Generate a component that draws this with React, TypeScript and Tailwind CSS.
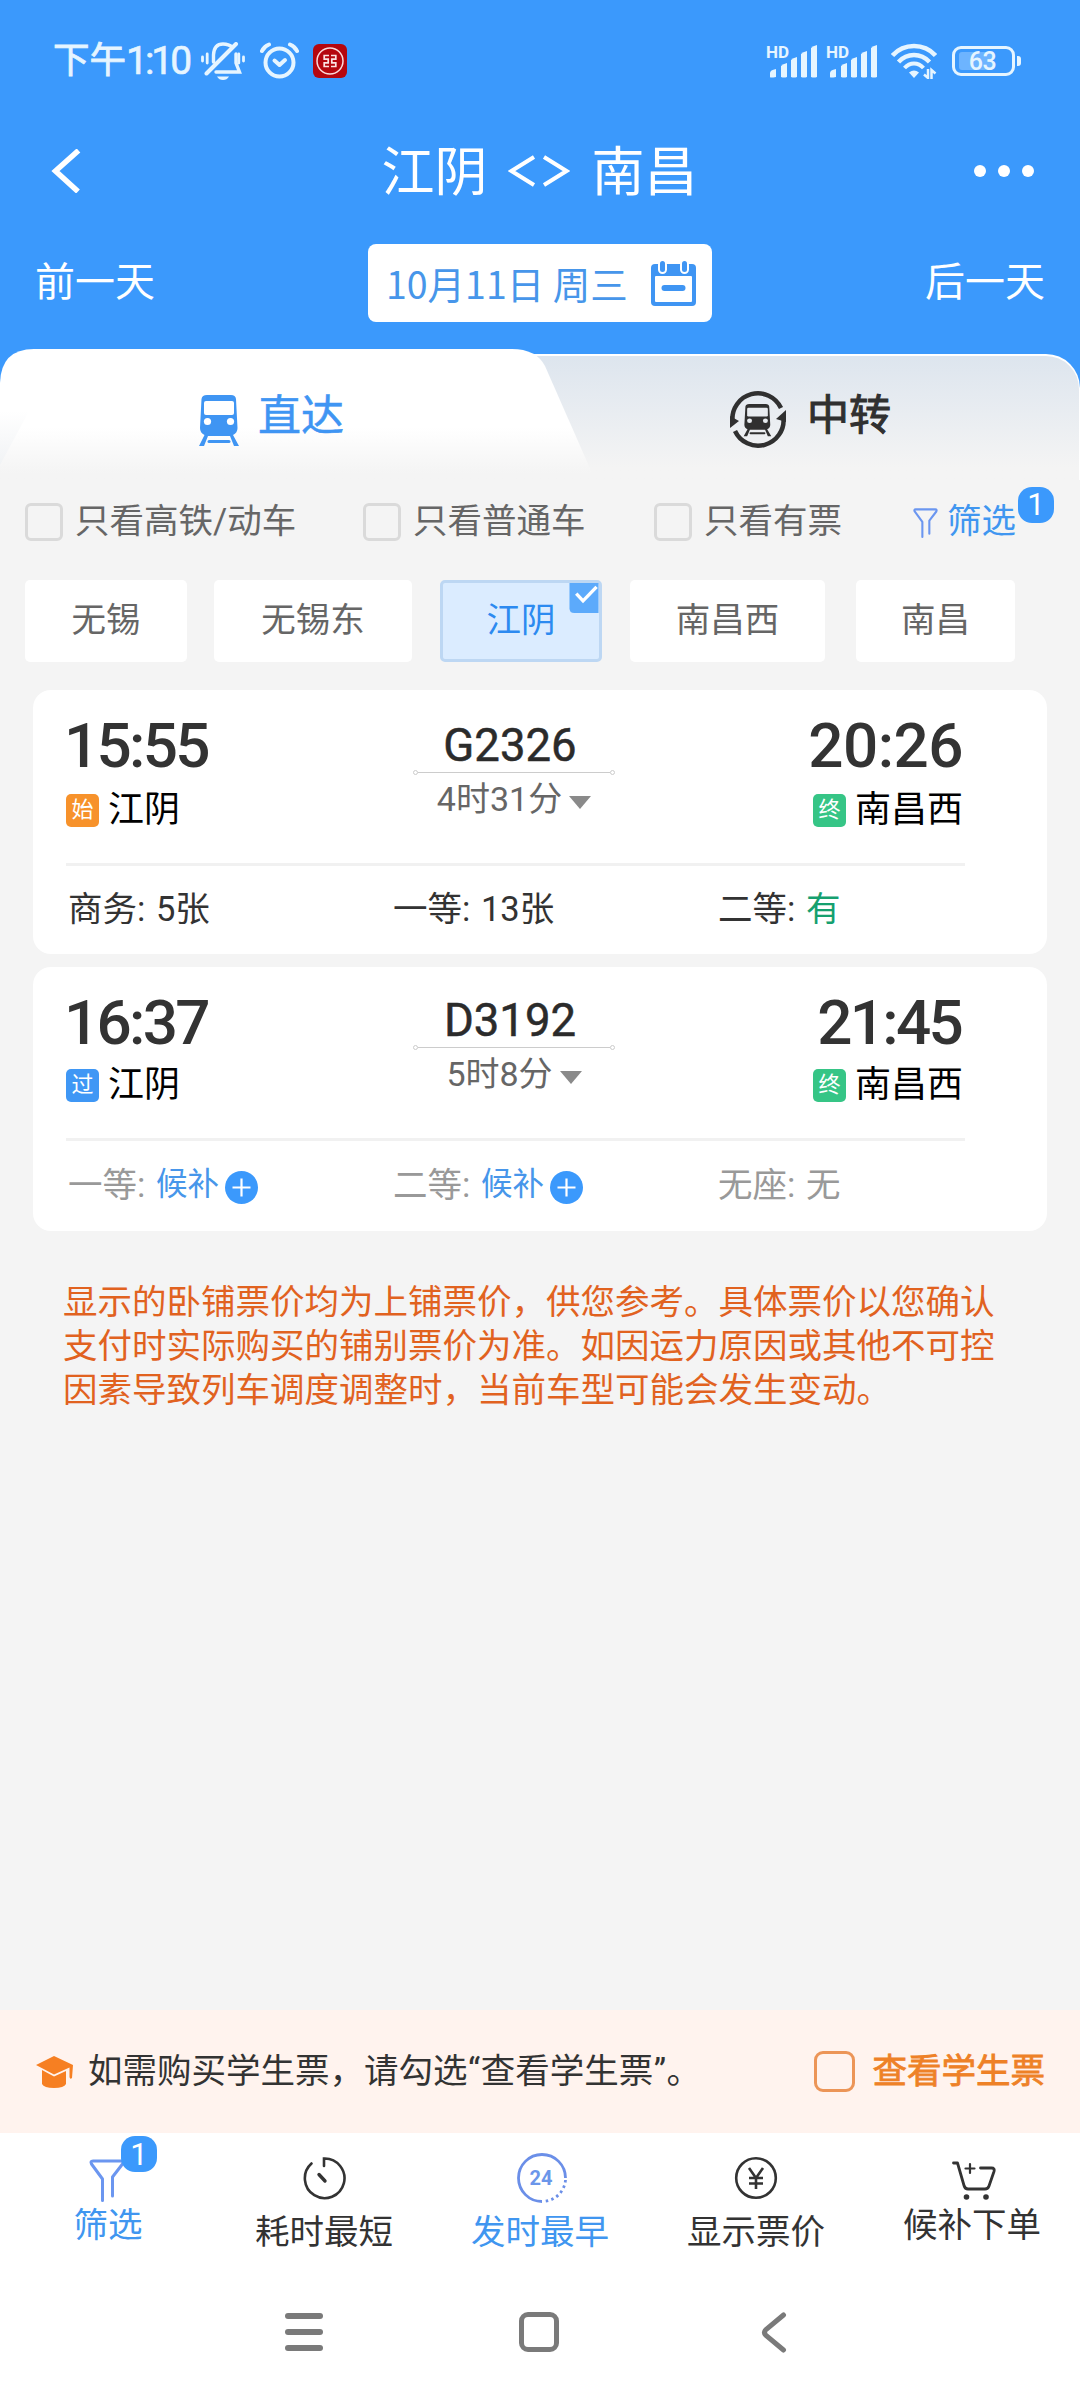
import React from "react";

type Seat = {
  label: string;
  value: string;
  status: "count" | "plenty" | "waitlist" | "none";
};

type Train = {
  code: string;
  duration: string;
  depart: string;
  arrive: string;
  from: string;
  to: string;
  fromTag: string;
  fromTagColor: string;
  rowHeight: string;
  seats: Seat[];
};

const trains: Train[] = [
  {
    code: "G2326",
    duration: "4时31分",
    depart: "15:55",
    arrive: "20:26",
    from: "江阴",
    to: "南昌西",
    fromTag: "始",
    fromTagColor: "bg-[#f7922b]",
    rowHeight: "h-[113px]",
    seats: [
      { label: "商务", value: "5张", status: "count" },
      { label: "一等", value: "13张", status: "count" },
      { label: "二等", value: "有", status: "plenty" },
    ],
  },
  {
    code: "D3192",
    duration: "5时8分",
    depart: "16:37",
    arrive: "21:45",
    from: "江阴",
    to: "南昌西",
    fromTag: "过",
    fromTagColor: "bg-[#3f97f5]",
    rowHeight: "h-[111px]",
    seats: [
      { label: "一等", value: "候补", status: "waitlist" },
      { label: "二等", value: "候补", status: "waitlist" },
      { label: "无座", value: "无", status: "none" },
    ],
  },
];

const stations = [
  { name: "无锡", box: "w-[162px]" },
  { name: "无锡东", box: "ml-[27px] w-[198px]" },
  { name: "江阴", box: "ml-[28px] w-[162px]", active: true },
  { name: "南昌西", box: "ml-[28px] w-[195px]" },
  { name: "南昌", box: "ml-[31px] w-[159px]" },
];

const notice = [
  "显示的卧铺票价均为上铺票价，供您参考。具体票价以您确认",
  "支付时实际购买的铺别票价为准。如因运力原因或其他不可控",
  "因素导致列车调度调整时，当前车型可能会发生变动。",
];

const SignalBars = () => (
  <div className="relative h-[34px] w-[50px]">
    <span className="absolute left-[-2px] top-[1px] text-[17px] font-bold leading-[14px]">HD</span>
    <svg width="50" height="34" viewBox="0 0 50 34" fill="currentColor">
      <path d="M2 33V29Q2 26 8 25V33Q2 34 2 33Z" />
      <path d="M13 33V22Q15 20 19 19V33Q16 34 13 33Z" />
      <path d="M23 33V16Q25 14 29 13V33Q26 34 23 33Z" />
      <path d="M33 33V10Q35 8 39 7V33Q36 34 33 33Z" />
      <path d="M43 33V4Q45 2 49 1V33Q46 34 43 33Z" />
    </svg>
  </div>
);

const StatusBar = () => (
  <div className="flex h-[122px] items-center pl-[53px] text-[#e6f5ff]">
    <span className="w-[73px] whitespace-nowrap text-[36.5px] leading-none [-webkit-text-stroke:0.8px]">下午</span>
    <span className="w-[75px] text-[39px] leading-none tracking-[-3px] [-webkit-text-stroke:0.6px]">1:10</span>
    <svg width="44" height="38" viewBox="0 0 44 38" fill="none" stroke="currentColor" strokeWidth="3.4" strokeLinecap="round">
      <path d="M12.5 20V13Q13 2 22 2Q28 2 31 5" />
      <path d="M35 12V21L38.5 30H15" />
      <path d="M5.5 31.5L35 2" strokeWidth="4" />
      <path d="M1.5 15V19M6.2 12V21M37.8 12V21M42.5 15V19" strokeWidth="2.8" />
      <path d="M16 34.5H28Q26 38 22 38Q18 38 16 34.5Z" fill="currentColor" stroke="none" />
    </svg>
    <svg className="ml-[15px]" width="39" height="38" viewBox="0 0 39 38" fill="none" stroke="currentColor" strokeWidth="4" strokeLinecap="round" strokeLinejoin="round">
      <circle cx="19.5" cy="20.5" r="14" />
      <path d="M2 9Q4 4.500 9 2.500M37 9Q35 4.500 30 2.500" />
      <path d="M14.500 18.500L19.500 23L25 18" />
    </svg>
    <svg className="ml-[14px]" width="34" height="34" viewBox="0 0 34 34" fill="none">
      <rect width="34" height="34" rx="6" fill="#b5070f" />
      <circle cx="17" cy="17" r="13" stroke="#fbd9d9" strokeWidth="1.500" />
      <path d="M16 11.500H11.200V15.200H15.200V18.800H11.200V22.500H16M18 11.500H22.800V15.200H18.800V18.800H22.800V22.500H18" stroke="#fbe3e3" strokeWidth="1.700" />
    </svg>
    <div className="ml-[421px] flex items-center">
      <SignalBars />
      <div className="w-[10px]" />
      <SignalBars />
      <svg className="ml-[13px]" width="46" height="36" viewBox="0 0 46 36" fill="none" stroke="currentColor" strokeWidth="4.500">
        <path d="M1.500 12.500Q10 3 23 3Q36 3 44.500 12.500" />
        <path d="M7.500 19Q14 12 23 12Q32 12 38.500 19" />
        <path d="M13.500 25Q17.500 20.500 23 20.500Q28.500 20.500 32.500 25" strokeWidth="4" />
        <path d="M18 29.500Q23 25.500 28 29.500L23 35Z" fill="currentColor" stroke="none" />
        <path d="M37 26V35L33 31.500M40.500 36V27L44.500 30.500" strokeWidth="2.500" />
      </svg>
      <div className="relative ml-[15px] flex h-[30px] w-[63px] items-center justify-center rounded-[9px] border-[3px] border-[#e6f5ff]">
        <div className="absolute left-[4px] top-[3px] h-[18px] w-[34px] rounded-[3px] bg-[#6db4ff]" />
        <span className="relative mr-[2px] text-[25px] font-medium leading-none tracking-[-0.5px]">63</span>
      </div>
      <div className="ml-[2px] h-[10px] w-[4px] rounded-r-[3px] bg-[#e6f5ff]" />
    </div>
  </div>
);

const TrainIcon = ({ window = "#fff" }: { window?: string }) => (
  <>
    <path d="M9 0H33Q37.500 0 38 4L39.500 33Q39.500 38 35 40L41 51H36L32 41H10L6 51H1L6.500 40Q2 38 2 33L3.500 4Q4 0 9 0Z" fill="currentColor" />
    <rect x="6" y="6" width="30" height="14" rx="2" fill={window} />
    <circle cx="9.500" cy="26.500" r="3.600" fill={window} />
    <circle cx="32.500" cy="26.500" r="3.600" fill={window} />
    <path d="M11 46.500H31" stroke="currentColor" strokeWidth="3" strokeLinecap="round" />
  </>
);

const Tabs = () => (
  <div className="relative h-[131px]">
    {/* Transfer tab sits behind the slanted direct tab */}
    <div className="absolute inset-x-0 bottom-0 top-[5px] rounded-tr-[34px] bg-white pr-[1px] pt-[2px] [clip-path:inset(0_0_0_60px)]">
      <div className="h-full rounded-tr-[33px] bg-gradient-to-b from-[#dde5ee] from-0% to-[#f4f4f4] to-90%" />
    </div>
    <div className="absolute left-0 top-0 h-[131px] w-[592px] bg-gradient-to-b from-white from-60% to-[#f4f4f4] to-95% [clip-path:path('M0_34Q1_0_34_0H512Q536_0_545_17L592_124V131H0Z')]">
      <div className="mt-[62px] h-[54px] w-[29px] bg-gradient-to-b from-white to-[#f1f3f5] [clip-path:polygon(0_0,100%_0,0_100%)]" />
    </div>
    <div className="relative flex h-[131px]">
      <div className="flex w-[540px] pl-[198px] pt-[46px] text-[#3f95f3]">
        <svg width="42" height="51" viewBox="0 0 42 51" fill="none">
          <TrainIcon />
        </svg>
        <span className="ml-[18px] h-[43px] text-[43px] leading-none [-webkit-text-stroke:0.5px]">直达</span>
      </div>
      <div className="flex w-[540px] pl-[190px] pt-[42px] text-[#303030]">
        <svg width="56" height="57" viewBox="0 0 56 57" fill="none">
          <path d="M2.500 30A25.500 25.500 0 0 1 51 17M53.500 27A25.500 25.500 0 0 1 5 40" stroke="currentColor" strokeWidth="4.500" />
          <path d="M0 37V25L9 30Z" fill="currentColor" />
          <path d="M56 19V31L46 28Z" fill="currentColor" />
          <g transform="translate(13 13) scale(.69 .63)">
            <TrainIcon window="#e8ecf0" />
          </g>
        </svg>
        <span className="ml-[21px] mt-[4px] h-[42px] text-[42px] leading-none [-webkit-text-stroke:1px]">中转</span>
      </div>
    </div>
  </div>
);

const FilterIcon = ({ className, stroke }: { className: string; stroke: number }) => (
  <svg className={className} viewBox="0 0 36 43" fill="none" stroke="#6b96f0" strokeWidth={stroke} strokeLinecap="round" strokeLinejoin="round">
    <path d="M13.500 41.500V20L2.500 5Q1 2 4 2H32Q35 2 33.500 5L23.500 18V37" />
  </svg>
);

const CheckItem = ({ label, className }: { label: string; className: string }) => (
  <div className={`flex items-center ${className}`}>
    <span className="h-[38px] w-[38px] rounded-[6px] border-[3px] border-[#dadada]" />
    <span className="mb-[2px] ml-[12px] text-[34.5px] leading-none">{label}</span>
  </div>
);

const Badge = ({ className }: { className: string }) => (
  <span
    className={`absolute flex h-[36px] w-[36px] items-center justify-center rounded-[14px] bg-[#3b99fc] text-[31px] leading-none text-white ${className}`}
  >
    1
  </span>
);

const StationTag = ({ text, color }: { text: string; color: string }) => (
  <span className={`flex h-[33px] w-[33px] items-center justify-center rounded-[5px] text-[22px] leading-none text-white ${color}`}>
    {text}
  </span>
);

const SeatCell = ({ seat }: { seat: Seat }) => {
  const muted = seat.status === "waitlist" || seat.status === "none";
  return (
    <div className={`flex w-[325px] shrink-0 items-center text-[34.5px] leading-none ${muted ? "text-[#999]" : "text-[#333]"}`}>
      <span className="whitespace-pre">{seat.label}: </span>
      {seat.status === "waitlist" ? (
        <>
          <span className="ml-[2px] text-[31.5px] text-[#4796ea]">{seat.value}</span>
          <svg className="ml-[6px] mt-[4px]" width="33" height="33" viewBox="0 0 33 33" stroke="#fff" strokeWidth="2.200">
            <circle cx="16.500" cy="16.500" r="16.500" fill="#3b99fc" stroke="none" />
            <path d="M7.500 16.500H25.500M16.500 7.500V25.500" />
          </svg>
        </>
      ) : (
        <span className={`ml-[2px] ${seat.status === "plenty" ? "text-[#15a06f]" : ""}`}>{seat.value}</span>
      )}
    </div>
  );
};

// Times holding a "1" are set tighter so the narrow digit leaves no gap
const TimeText = ({ time }: { time: string }) => (
  <span
    className={`text-[62px] font-medium leading-none text-[#333] ${
      time.includes("1") ? "mr-px tracking-[-2.700px]" : "mr-[-1px] tracking-[-0.500px]"
    }`}
  >
    {time}
  </span>
);

const TrainCard = ({ train }: { train: Train }) => (
  <div className="flex h-[264px] flex-col rounded-[18px] bg-white px-[33px] pt-[25px]">
    <div className={`flex ${train.rowHeight}`}>
      <div className="flex w-[347px] flex-col justify-between">
        <div className="ml-[-2px] flex">
          <TimeText time={train.depart} />
        </div>
        <div className="flex items-center">
          <StationTag text={train.fromTag} color={train.fromTagColor} />
          <span className="ml-[9px] text-[36px] leading-none text-black">{train.from}</span>
        </div>
      </div>
      <div className="flex w-[202px] flex-col items-center justify-end pb-[12px]">
        <span className="mb-[2px] mr-[8px] text-[45.500px] leading-none text-[#2b2b2b] [-webkit-text-stroke:0.5px]">{train.code}</span>
        <div className="flex w-full items-center">
          <i className="h-[5px] w-[5px] rounded-full border border-[#ccc]" />
          <i className="h-px flex-1 bg-[#ccc]" />
          <i className="h-[5px] w-[5px] rounded-full border border-[#ccc]" />
        </div>
        <div className="mt-[7px] flex items-center text-[#666]">
          <span className="text-[34px] leading-none">{train.duration}</span>
          <svg className="ml-[7px] mt-[6px]" width="22" height="13" viewBox="0 0 22 13">
            <path d="M0 0H22L11 13Z" fill="#8a8a8a" />
          </svg>
        </div>
      </div>
      <div className="flex flex-1 flex-col items-end justify-between pr-[52px]">
        <TimeText time={train.arrive} />
        <div className="flex items-center">
          <StationTag text="终" color="bg-[#36c586]" />
          <span className="ml-[9px] mr-[-1px] text-[36px] leading-none text-black">{train.to}</span>
        </div>
      </div>
    </div>
    <div className="mt-[35px] h-[3px] w-[899px] bg-[#f1f1f1]" />
    <div className="flex flex-1 items-center pb-[2px] pl-[2px]">
      {train.seats.map((seat) => (
        <SeatCell key={seat.label} seat={seat} />
      ))}
    </div>
  </div>
);

const ToolItem = ({
  label,
  gap,
  color = "text-[#333]",
  children,
}: {
  label: string;
  gap: string;
  color?: string;
  children: React.ReactNode;
}) => (
  <div className={`flex w-[216px] flex-col items-center pt-[20px] ${color}`}>
    <div className="relative flex h-[50px] w-[50px] items-center justify-center">{children}</div>
    <span className={`text-[34.5px] leading-none ${gap}`}>{label}</span>
  </div>
);

const Toolbar = () => (
  <div className="flex h-[131px] bg-white">
    <ToolItem label="筛选" gap="mt-[5px]" color="text-[#4096f0]">
      <FilterIcon className="mr-[3px] mt-[4px] h-[43px] w-[36px]" stroke={3} />
      <Badge className="left-[38px] top-[-17px]" />
    </ToolItem>
    <ToolItem label="耗时最短" gap="mt-[12px]">
      <svg width="44" height="44" viewBox="0 0 44 44" fill="none" stroke="currentColor" strokeWidth="2.600" strokeLinecap="round">
        <path d="M22 10V2.500A19.800 19.800 0 1 1 9.500 7.500" />
        <path d="M17 18.500L23 25" strokeWidth="3.400" />
      </svg>
    </ToolItem>
    <ToolItem label="发时最早" gap="mt-[12px]" color="text-[#4096f0]">
      <svg className="ml-[3px] shrink-0" width="52" height="50" viewBox="0 0 52 50" fill="none" stroke="#6b8fe8" strokeWidth="2.800">
        <path d="M26 48.500A23.500 23.500 0 1 1 49.500 25" />
        <path d="M49.500 27A23.500 23.500 0 0 1 27 48.500" strokeDasharray="2.500 3.200" />
      </svg>
      <span className="absolute ml-[2px] text-[20px] font-bold leading-none text-[#6b96ea]">24</span>
    </ToolItem>
    <ToolItem label="显示票价" gap="mt-[12px]">
      <svg width="44" height="44" viewBox="0 0 44 44" fill="none" stroke="currentColor" strokeWidth="2.600">
        <circle cx="22" cy="22" r="19.800" />
        <path d="M15 12L22 22L29 12M22 22V33M15 22H29M15 27.500H29" />
      </svg>
    </ToolItem>
    <ToolItem label="候补下单" gap="mt-[5px]">
      <svg className="ml-[3px] mt-[6px]" width="44" height="40" viewBox="0 0 44 40" fill="none" stroke="currentColor" strokeWidth="2.800" strokeLinecap="round" strokeLinejoin="round">
        <path d="M1.500 2H5.500L12 24.500Q13 28 16 28H33Q36 28 37 25L42 10.500Q43 7 39.500 7H28.500" />
        <path d="M18 3V12M13.500 7.500H22.500" strokeWidth="2.200" />
        <circle cx="14.500" cy="36" r="2.800" fill="currentColor" stroke="none" />
        <circle cx="34" cy="36" r="2.800" fill="currentColor" stroke="none" />
      </svg>
    </ToolItem>
  </div>
);

const App = () => {
  return (
    <div className="flex h-[2400px] w-[1080px] flex-col overflow-hidden bg-[#f4f4f4] font-['Roboto','Noto_Sans_CJK_SC',sans-serif]">
      <div className="bg-[#3b99fc] text-white">
        <StatusBar />
        {/* Route title */}
        <div className="flex h-[97px] items-center justify-between pl-[51px] pr-[46px]">
          <svg width="30" height="44" viewBox="0 0 30 44" fill="none" stroke="currentColor" strokeWidth="5.500">
            <path d="M27.500 1.500L4.500 22L27 42.500" />
          </svg>
          <h1 className="mb-[5px] ml-[24px] flex items-center text-[53px] leading-none font-['Noto_Sans_CJK_SC',sans-serif]">
            江阴
            <svg className="ml-[20px] mr-[22px] mt-[5px]" width="62" height="34" viewBox="0 0 62 34" fill="none" stroke="currentColor" strokeWidth="4">
              <path d="M26 3L3.500 17L26 31M36 3L58.500 17L36 31" />
            </svg>
            南昌
          </h1>
          <div className="flex gap-[12px]">
            <i className="h-[12px] w-[12px] rounded-full bg-white" />
            <i className="h-[12px] w-[12px] rounded-full bg-white" />
            <i className="h-[12px] w-[12px] rounded-full bg-white" />
          </div>
        </div>
        {/* Date switcher */}
        <div className="flex h-[130px] items-center justify-between px-[35px] pb-[2px] text-[40px] leading-none">
          <span>前一天</span>
          <div className="flex h-[78px] w-[344px] items-center rounded-[8px] bg-white pl-[18px] text-[37.5px] text-[#4796ea] font-['Noto_Sans_CJK_SC',sans-serif]">
            <span className="w-[265px] whitespace-nowrap">10月11日 周三</span>
            <svg width="45" height="46" viewBox="0 0 45 46" fill="none">
              <path d="M4 4H41Q45 4 45 8V42Q45 46 41 46H4Q0 46 0 42V8Q0 4 4 4Z" fill="#3f95f3" />
              <rect x="4" y="16" width="37" height="26" rx="1" fill="#fff" />
              <rect x="7" y="0" width="9" height="14" rx="4.500" fill="#fff" />
              <rect x="29" y="0" width="9" height="14" rx="4.500" fill="#fff" />
              <rect x="9" y="1" width="5" height="11" rx="2.500" fill="#3f95f3" />
              <rect x="31" y="1" width="5" height="11" rx="2.500" fill="#3f95f3" />
              <rect x="10.500" y="25" width="24" height="6" rx="3" fill="#3f95f3" />
            </svg>
          </div>
          <span>后一天</span>
        </div>
        <Tabs />
      </div>

      {/* Quick filters */}
      <div className="flex h-[84px] items-center pl-[25px] text-[#666]">
        <CheckItem label="只看高铁/动车" className="w-[338px]" />
        <CheckItem label="只看普通车" className="w-[291px]" />
        <CheckItem label="只看有票" className="w-[258px]" />
        <div className="relative flex items-center text-[#4096f0]">
          <FilterIcon className="mt-[1px] h-[30px] w-[27px]" stroke={3} />
          <span className="mb-[2px] ml-[8px] text-[34.5px] leading-none">筛选</span>
          <Badge className="left-[106px] top-[-17px]" />
        </div>
      </div>

      <div className="mt-[16px] flex pl-[25px]">
        {stations.map((station) => (
          <div
            key={station.name}
            className={`relative flex h-[82px] items-center justify-center rounded-[5px] pb-[2px] text-[34.5px] leading-none ${station.box} ${
              station.active ? "border-[3px] border-[#bdd7f3] bg-[#dbecff] text-[#2c8af0]" : "bg-white text-[#666]"
            }`}
          >
            {station.name}
            {station.active && (
              <svg className="absolute right-0 top-0" width="30" height="30" viewBox="0 0 30 31" fill="none">
                <path d="M0 0H30V31H5Q0 31 0 26Z" fill="#5caafb" />
                <path d="M7 11L14 18.500L28 4" stroke="#fff" strokeWidth="3.500" />
              </svg>
            )}
          </div>
        ))}
      </div>

      {/* Train list */}
      <div className="mx-[33px] mt-[28px] flex flex-col gap-[13px]">
        {trains.map((train) => (
          <TrainCard key={train.code} train={train} />
        ))}
      </div>

      <div className="ml-[63px] mt-[49px] whitespace-nowrap text-[34.5px] leading-[44px] text-[#e1621f]">
        {notice.map((line) => (
          <p key={line}>{line}</p>
        ))}
      </div>

      {/* Student ticket banner */}
      <div className="mt-auto flex h-[123px] items-center bg-[#fff3ee] pl-[36px] pr-[35px] text-[34.5px] leading-none">
        <svg width="37" height="32" viewBox="0 0 37 32" fill="#f67f22">
          <path d="M18 0L37 9L36 22Q34 24 33.500 21V11.500L18 18.500L0 9Z" />
          <path d="M6 14L18 20.500L30 15V28Q28 32 18 32Q8 32 6 28Z" />
        </svg>
        <span className="ml-[15px] whitespace-nowrap text-[#333]">
          如需购买学生票，请勾选<span className="mx-[0.500px]">“</span>查看学生票<span className="mx-[0.500px]">”</span>。
        </span>
        <span className="ml-auto h-[41px] w-[41px] rounded-[9px] border-[3px] border-[#ec9557]" />
        <span className="ml-[18px] text-[#ee8127] [-webkit-text-stroke:0.8px]">查看学生票</span>
      </div>
      <Toolbar />

      {/* System navigation */}
      <div className="flex h-[136px] items-center bg-white pl-[285px]">
        <div className="flex w-[38px] flex-col gap-[10px]">
          <i className="h-[6px] rounded-full bg-[#7a7a7a]" />
          <i className="h-[6px] rounded-full bg-[#7a7a7a]" />
          <i className="h-[6px] rounded-full bg-[#7a7a7a]" />
        </div>
        <div className="ml-[196px] h-[40px] w-[40px] rounded-[9px] border-[5px] border-[#7a7a7a]" />
        <svg className="ml-[202px]" width="26" height="41" viewBox="0 0 26 41" fill="none" stroke="#7a7a7a" strokeWidth="5" strokeLinecap="round">
          <path d="M22.500 3L5 17.500Q2 20.500 5 23.500L22.500 38" />
        </svg>
      </div>
    </div>
  );
};

export default App;
